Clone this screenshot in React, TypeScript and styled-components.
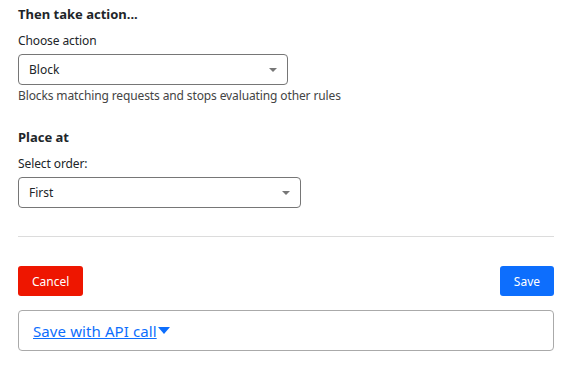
import styled, { createGlobalStyle } from "styled-components";

const GlobalStyle = createGlobalStyle`
  body {
    margin: 0;
    background: #fff;
    font-family: "Noto Sans", "Open Sans", sans-serif;
    color: #212529;
  }
`;

const Page = styled.div`
  width: 577px;
  padding: 4px 23px 0 18px;
  box-sizing: border-box;
  display: flex;
  flex-direction: column;
`;

const Section = styled.div<{ gap?: number }>`
  display: flex;
  flex-direction: column;
  margin-top: ${(p) => p.gap ?? 0}px;
`;

const Heading = styled.div`
  font-size: 13px;
  font-weight: 700;
  line-height: 20px;
  margin-bottom: 8px;
`;

const Label = styled.label`
  font-size: 12px;
  line-height: 18px;
  margin-bottom: 4px;
  letter-spacing: -0.1px;
`;

const SelectBox = styled.div<{ width: number }>`
  width: ${(p) => p.width}px;
  height: 31px;
  box-sizing: border-box;
  border: 1px solid #767676;
  border-radius: 4px;
  display: flex;
  align-items: center;
  justify-content: space-between;
  padding: 0 10px;
  font-size: 12px;
`;

const Caret = styled.span`
  width: 0;
  height: 0;
  border-left: 4px solid transparent;
  border-right: 4px solid transparent;
  border-top: 4px solid #777;
`;

const Help = styled.div`
  font-size: 12px;
  line-height: 18px;
  color: #444;
  margin-top: 2px;
  letter-spacing: -0.12px;
`;

const Divider = styled.hr`
  border: none;
  border-top: 1px solid #dcdcdc;
  margin: 28px 0 0 0;
  width: 536px;
`;

const Actions = styled.div`
  display: flex;
  justify-content: space-between;
  width: 536px;
  margin-top: 29px;
`;

const Button = styled.button<{ variant: "danger" | "primary" }>`
  height: 30px;
  padding: 0 14px;
  border: none;
  border-radius: 3px;
  color: #fff;
  font-family: inherit;
  font-size: 12px;
  background: ${(p) => (p.variant === "danger" ? "#ee1600" : "#0d6efd")};
`;

const ApiBox = styled.div`
  width: 536px;
  height: 41px;
  box-sizing: border-box;
  margin-top: 14px;
  border: 1px solid #aaa;
  border-radius: 4px;
  display: flex;
  align-items: center;
  padding: 0 14px;
`;

const ApiLink = styled.a`
  color: #0d6efd;
  font-size: 15px;
  letter-spacing: 0.1px;
  text-decoration: underline;
  display: inline-flex;
  align-items: center;
`;

const LinkCaret = styled.span`
  width: 0;
  height: 0;
  border-left: 6px solid transparent;
  border-right: 6px solid transparent;
  border-top: 7px solid #0d6efd;
  margin-left: 1px;
`;

export default function App() {
  return (
    <>
      <GlobalStyle />
      <Page>
        <Section>
          <Heading>Then take action...</Heading>
          <Label>Choose action</Label>
          <SelectBox width={270}>
            Block
            <Caret />
          </SelectBox>
          <Help>Blocks matching requests and stops evaluating other rules</Help>
        </Section>
        <Section gap={22}>
          <Heading>Place at</Heading>
          <Label>Select order:</Label>
          <SelectBox width={283}>
            First
            <Caret />
          </SelectBox>
        </Section>
        <Divider />
        <Actions>
          <Button variant="danger">Cancel</Button>
          <Button variant="primary">Save</Button>
        </Actions>
        <ApiBox>
          <ApiLink href="#">
            Save with API call
            <LinkCaret />
          </ApiLink>
        </ApiBox>
      </Page>
    </>
  );
}
